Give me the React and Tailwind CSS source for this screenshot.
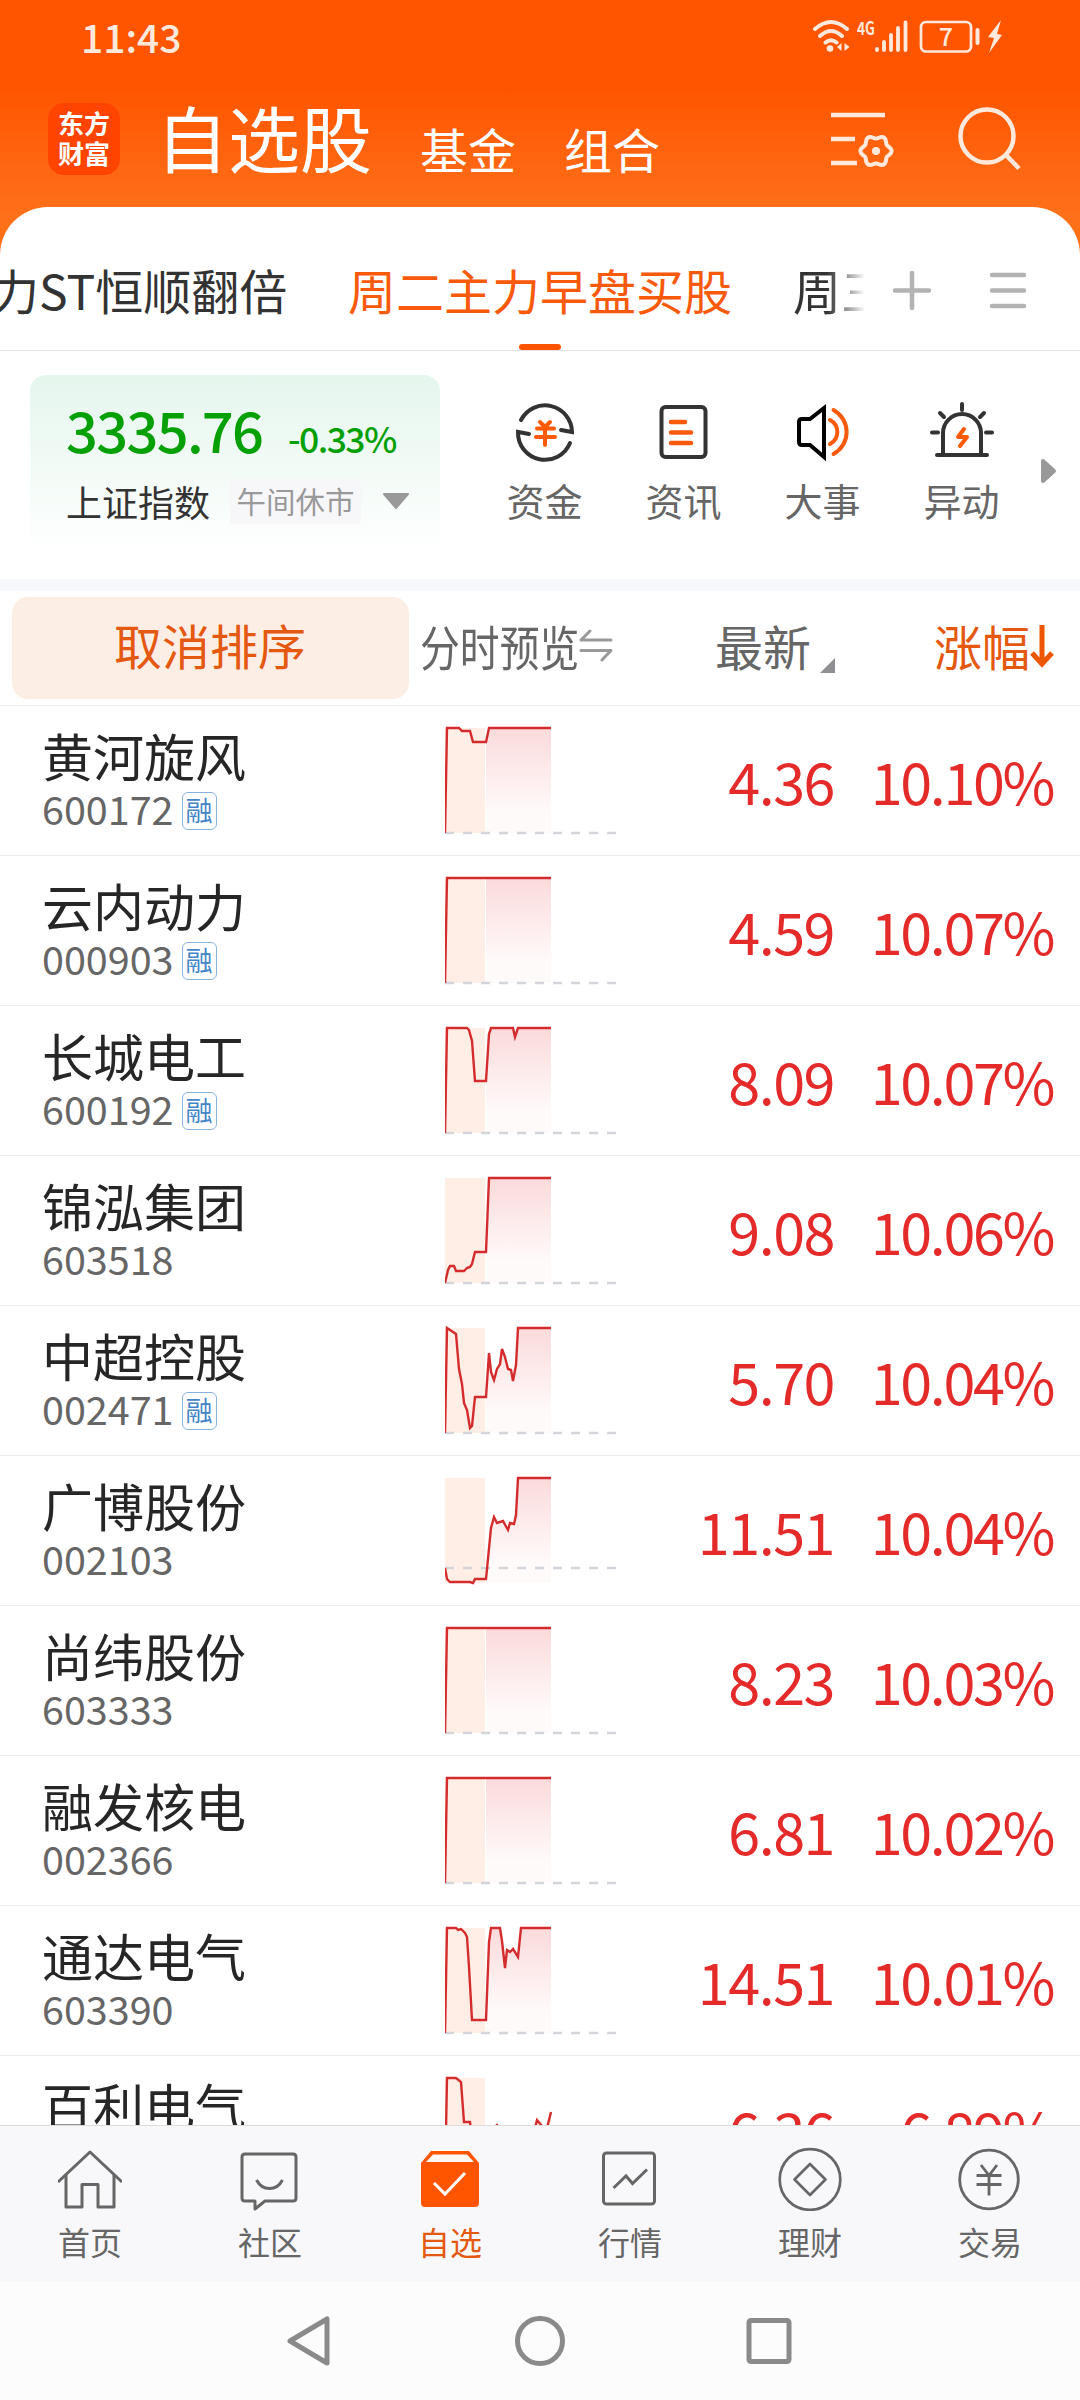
const STOCKS = [
  { name: "黄河旋风", code: "600172", margin: true, price: "4.36", change: "10.10%", base: 105, line: "0,105 2,0 14,0 17,3 25,3 28,14 41,14 44,0 106,0" },
  { name: "云内动力", code: "000903", margin: true, price: "4.59", change: "10.07%", base: 105, line: "0,105 2,0 106,0" },
  { name: "长城电工", code: "600192", margin: true, price: "8.09", change: "10.07%", base: 105, line: "0,105 2,0 22,0 24,2 27,13 30,53 41,53 44,6 46,0 68,0 70,9 73,0 106,0" },
  { name: "锦泓集团", code: "603518", margin: false, price: "9.08", change: "10.06%", base: 105, line: "0,105 3,92 5,88 9,88 11,93 19,93 22,90 25,89 27,86 30,74 41,74 44,0 106,0" },
  { name: "中超控股", code: "002471", margin: true, price: "5.70", change: "10.04%", base: 105, line: "0,105 2,0 11,6 14,41 17,56 19,75 22,82 25,100 27,98 30,69 41,69 44,25 46,44 49,52 52,41 55,36 57,21 60,29 63,41 66,42 68,53 71,37 73,0 106,0" },
  { name: "广博股份", code: "002103", margin: false, price: "11.51", change: "10.04%", base: 90, line: "0,90 2,101 5,104 25,104 28,105 30,101 41,101 46,50 49,39 52,45 58,43 63,52 65,45 69,46 71,37 73,0 106,0" },
  { name: "尚纬股份", code: "603333", margin: false, price: "8.23", change: "10.03%", base: 105, line: "0,105 2,0 106,0" },
  { name: "融发核电", code: "002366", margin: false, price: "6.81", change: "10.02%", base: 105, line: "0,105 2,0 106,0" },
  { name: "通达电气", code: "603390", margin: false, price: "14.51", change: "10.01%", base: 105, line: "0,105 2,0 11,0 13,2 16,1 20,5 22,9 24,39 27,92 41,92 44,14 46,0 55,0 57,13 60,40 62,22 65,24 68,21 73,29 76,0 106,0" },
  { name: "百利电气", code: "600468", margin: false, price: "6.36", change: "6.89%", base: 105, line: "0,105 2,0 11,0 16,4 19,44 25,44 27,60 41,60 44,54 52,47 60,56 80,60 90,50 92,42 97,48 102,50 106,34" },
];

const SHORTCUTS = [
  { label: "资金", icon: FundIcon },
  { label: "资讯", icon: NewsIcon },
  { label: "大事", icon: EventIcon },
  { label: "异动", icon: AlarmIcon },
];

const TABS = [
  { label: "首页", icon: HomeIcon },
  { label: "社区", icon: CommunityIcon },
  { label: "自选", icon: WatchlistIcon, active: true },
  { label: "行情", icon: MarketIcon },
  { label: "理财", icon: WealthIcon },
  { label: "交易", icon: TradeIcon },
];

// six-lobed gear outline around (46, 41)
const GEAR = Array.from({ length: 72 }, (_, i) => {
  const a = (i * Math.PI) / 36;
  const r = 14 + 1.6 * Math.cos(6 * a);
  return `${(46 + r * Math.cos(a)).toFixed(1)},${(41 + r * Math.sin(a)).toFixed(1)}`;
}).join(" ");

function FundIcon() {
  return (
    <svg width="64" height="64" viewBox="0 0 64 64" fill="none" strokeWidth="4">
      <path d="M8 20 A27 27 0 0 1 59 32 L48 30" stroke="#333" strokeLinecap="round" />
      <path d="M57 43 A27 27 0 0 1 5 32 L16 34" stroke="#333" strokeLinecap="round" />
      <path d="M27 22 L32 27 L37 22 M24 28.500 H41 M23 37 H42 M32 27 V45" stroke="#ff5a05" strokeLinecap="round" />
    </svg>
  );
}

function NewsIcon() {
  return (
    <svg width="64" height="64" viewBox="0 0 64 64" fill="none" strokeWidth="4" strokeLinecap="round">
      <rect x="9.5" y="7" width="44" height="50" rx="4" stroke="#333" />
      <path d="M19 22 H33 M19 32.500 H39 M19 43 H39" stroke="#f85a0c" strokeWidth="4.500" />
    </svg>
  );
}

function EventIcon() {
  return (
    <svg width="64" height="64" viewBox="0 0 64 64" fill="none" strokeWidth="4" strokeLinecap="round">
      <path d="M33 8 L19 19 H11 Q8 19 8 22 V42 Q8 45 11 45 H19 L33 57 Z" stroke="#000" />
      <path d="M39 20 A13.5 13.500 0 0 1 39 44" stroke="#f85a0c" />
      <path d="M42.500 10 A25 25 0 0 1 42.500 54" stroke="#f85a0c" />
    </svg>
  );
}

function AlarmIcon() {
  return (
    <svg width="64" height="64" viewBox="0 0 64 64" fill="none" strokeWidth="4" strokeLinecap="round" strokeLinejoin="round">
      <path d="M13 54 V33 A19 19 0 0 1 51 33 V54 M7 55 H57" stroke="#333" />
      <path d="M32 4 V10 M10 13 L14 17 M54 13 L50 17 M2 32.500 H8 M56 32.500 H62" stroke="#333" />
      <path d="M34 29 L28 37 L37 37 L30 46" stroke="#ff5a05" />
    </svg>
  );
}

function HomeIcon() {
  return (
    <svg width="64" height="64" viewBox="0 0 64 64" fill="none" stroke="#666" strokeWidth="3" strokeLinejoin="round">
      <path d="M0 35 L32 5 L64 35" />
      <path d="M8 28 V60 H24 V37.500 H40 V60 H56 V28" />
    </svg>
  );
}

function CommunityIcon() {
  return (
    <svg width="64" height="64" viewBox="0 0 64 64" fill="none" stroke="#666" strokeWidth="3" strokeLinejoin="round">
      <path d="M7 7 H55 Q58 7 58 10 V51 Q58 54 55 54 H27 L17 62 V54 H7 Q4 54 4 51 V10 Q4 7 7 7 Z" />
      <path d="M18.500 33 Q23 41.500 31.500 41.500 Q40 41.500 44.500 33" />
    </svg>
  );
}

function WatchlistIcon() {
  return (
    <svg width="64" height="64" viewBox="0 0 64 64">
      <path d="M3 16 L13 4 H51 L61 16 V56 Q61 60 57 60 H7 Q3 60 3 56 Z" fill="#ff5500" />
      <path d="M8 15 L15 7.500 H49 L56 15 Z" fill="#fdf6f2" />
      <path d="M16 36 L27 47 L47 26" fill="none" stroke="#fff" strokeWidth="3" />
    </svg>
  );
}

function MarketIcon() {
  return (
    <svg width="64" height="64" viewBox="0 0 64 64" fill="none" stroke="#666" strokeWidth="3">
      <rect x="5.500" y="6" width="51" height="51" rx="3" />
      <path d="M15.500 41 L28 29 L34.500 36.500 L49 22.500" />
    </svg>
  );
}

function WealthIcon() {
  return (
    <svg width="64" height="64" viewBox="0 0 64 64" fill="none" stroke="#666" strokeWidth="2.700" strokeLinejoin="round">
      <circle cx="32" cy="32.500" r="30.300" />
      <path d="M32 17 L47.500 32.500 L32 48 L16.500 32.500 Z" />
    </svg>
  );
}

function TradeIcon() {
  return (
    <svg width="64" height="64" viewBox="0 0 64 64" fill="none" stroke="#666" strokeWidth="2.800">
      <circle cx="31" cy="32.500" r="29.300" />
      <path d="M23 18 L31 28.500 L39 18 M18.500 28.500 H43.500 M18.500 37.500 H43.500 M31 28.500 V48.500" />
    </svg>
  );
}

function StatusBar() {
  return (
    <div className="flex h-[72px] items-center justify-between pl-[81px] pr-[76px] text-[#ffe9dc]">
      <span className="text-[39px] font-medium leading-[60px]">11:43</span>
      <svg width="192" height="36" viewBox="0 0 192 36" fill="none" stroke="currentColor">
        <path d="M3 11 Q19 -3 35 11 M8 18 Q19 8 30 18 M13.500 24.500 Q19 20 24.500 24.500" strokeWidth="4" strokeLinecap="round" />
        <circle cx="18" cy="30.500" r="3.300" fill="currentColor" stroke="none" />
        <path d="M29.500 25 V33 L25 29 Z M32.500 25 V33 L37.500 29 Z" fill="currentColor" stroke="none" />
        <text x="45" y="17" fontSize="18" fontWeight="700" textLength="18" lengthAdjust="spacingAndGlyphs" fill="currentColor" stroke="none">4G</text>
        <path d="M65 31 V32 M72 24 V32 M79 17 V32 M86 10 V32 M93.500 4.500 V32" strokeWidth="3.800" strokeLinecap="round" />
        <rect x="109" y="4" width="50" height="29.500" rx="5" strokeWidth="2.700" />
        <path d="M165.500 12 V25" strokeWidth="4" strokeLinecap="round" />
        <text x="134" y="27.500" fontSize="25" fontWeight="500" textAnchor="middle" fill="currentColor" stroke="none">7</text>
        <path d="M189 2 L176 19 L182 20 L177 35 L190 17 L185 16 Z" fill="currentColor" stroke="none" />
      </svg>
    </div>
  );
}

function Header() {
  return (
    <div className="flex h-[135px] pl-12 pr-[58px]">
      <div className="mt-[31px] flex size-[72px] shrink-0 flex-col items-center justify-center rounded-2xl bg-[#ff4400] pb-0.5 text-[26px] font-bold leading-[30px] text-white">
        <span>东方</span>
        <span>财富</span>
      </div>
      <div className="ml-[36px] flex h-[106px] items-end text-white">
        <span className="pb-[2px] text-[72px] leading-[80px]">自选股</span>
        <span className="ml-[48px] text-[48px] leading-[59px]">基金</span>
        <span className="ml-[48px] text-[48px] leading-[59px]">组合</span>
      </div>
      <div className="ml-auto flex items-start gap-[64px] pt-[38px]">
        <svg width="64" height="64" viewBox="0 0 64 64" fill="none" stroke="#ffe9dc" strokeWidth="4.500">
          <path d="M1 5 H55 M1 29 H25 M1 53 H27" />
          <polygon points={GEAR} strokeWidth="4" strokeLinejoin="round" />
          <circle cx="46" cy="41" r="4" fill="#ffe9dc" stroke="none" />
        </svg>
        <svg className="overflow-visible" width="64" height="64" viewBox="0 0 64 64" fill="none" stroke="#ffe9dc" strokeWidth="4.500">
          <circle cx="29" cy="26" r="26.500" />
          <path d="M48 45 L61 58.500" />
        </svg>
      </div>
    </div>
  );
}

function GroupTabs() {
  return (
    <div className="flex h-[144px] border-b border-[#e4e4e6] text-[48px] leading-[60px]">
      <div className="flex h-full w-[866px] overflow-hidden whitespace-nowrap pt-[52px]">
        <span className="-ml-[9px] w-[357px] shrink-0 text-[#333]">力ST恒顺翻倍</span>
        <div className="flex w-[384px] shrink-0 flex-col items-center text-[#f85a0c]">
          <span>周二主力早盘买股</span>
          <span className="mt-[25px] h-1.5 w-[42px] rounded-full bg-[#ff5500]" />
        </div>
        <span className="ml-[61px] shrink-0 bg-linear-to-r from-[#333] from-35% to-white to-75% bg-clip-text text-transparent">周三</span>
      </div>
      <svg className="mt-[64px] ml-[26px]" width="40" height="40" viewBox="0 0 40 40" stroke="#b3b3b3" strokeWidth="4.500" strokeLinecap="round">
        <path d="M3 19.500 H37 M20 2 V37" />
      </svg>
      <svg className="mt-[64px] ml-[56px]" width="40" height="40" viewBox="0 0 40 40" stroke="#b3b3b3" strokeWidth="4.500" strokeLinecap="round">
        <path d="M4 4 H36 M4 19.500 H36 M4 35 H36" />
      </svg>
    </div>
  );
}

function IndexPanel() {
  return (
    <div className="flex h-[228px] pl-[30px] pt-6">
      <div className="h-[180px] w-[410px] rounded-2xl bg-linear-to-b from-[#e5f6ed] to-white pl-[36px] pt-[25px]">
        <div className="flex items-baseline leading-[58px] text-[#05a005]">
          <span className="w-[222px] text-[56px] font-medium tracking-[-1.700px]">3335.76</span>
          <span className="text-[35.500px] font-medium tracking-[-1.600px]">-0.33%</span>
        </div>
        <div className="mt-[11px] flex items-center">
          <span className="text-[36px] leading-[46px] text-[#333]">上证指数</span>
          <span className="ml-[20px] h-[45px] w-[131px] rounded bg-[#f7f7fa] text-center text-[29.500px] leading-[43px] text-[#999]">午间休市</span>
          <svg className="ml-[21px]" width="28" height="17" viewBox="0 0 28 17">
            <path d="M2 1 H26 L14 15 Z" fill="#999" stroke="#999" strokeWidth="2" strokeLinejoin="round" />
          </svg>
        </div>
      </div>
      <div className="ml-[35px] flex">
        {SHORTCUTS.map(({ label, icon: Icon }) => (
          <div key={label} className="flex w-[139px] flex-col items-center pt-[25px]">
            <Icon />
            <span className="mt-[12px] text-[38px] leading-[48px] text-[#666]">{label}</span>
          </div>
        ))}
      </div>
      <svg className="ml-[10px] mt-[83px]" width="16" height="26" viewBox="0 0 16 26">
        <path d="M2 3 L13 13 L2 23 Z" fill="#999" stroke="#999" strokeWidth="4" strokeLinejoin="round" />
      </svg>
    </div>
  );
}

function ListHeader() {
  return (
    <div className="flex h-[115px] items-center border-b border-[#ebebed] pl-3 text-[48px] leading-[60px]">
      <div className="h-[102px] w-[397px] rounded-2xl bg-[#fdeee5] pr-[1px] pt-[17px] text-center text-[#e4580f]">取消排序</div>
      <span className="mb-[6px] ml-[11px] w-[159px] shrink-0 origin-left scale-x-[0.83] whitespace-nowrap text-[#666]">分时预览</span>
      <svg className="mb-[6px]" width="34" height="34" viewBox="0 0 34 34" fill="none" stroke="#999" strokeWidth="3" strokeLinecap="round" strokeLinejoin="round">
        <path d="M32 12 H2 L11 3 M2 22.500 H32 L23 32" />
      </svg>
      <span className="mb-[6px] ml-[102px] text-[#666]">最新</span>
      <svg className="ml-[9px] mt-[34px]" width="15" height="15" viewBox="0 0 15 15">
        <path d="M15 0 V15 H0 Z" fill="#8e8e93" />
      </svg>
      <span className="mb-[6px] ml-[99px] text-[#e4580f]">涨幅</span>
      <svg className="mb-[4px]" width="24" height="44" viewBox="0 0 24 44" fill="none" stroke="#ee5500" strokeWidth="5">
        <path d="M12 1 V39 M2 29 L12 40 L22 29" />
      </svg>
    </div>
  );
}

function Sparkline({ line, base }) {
  return (
    <svg className="shrink-0" width="176" height="112" viewBox="0 -3 176 112" fill="none">
      <defs>
        <linearGradient id="area" gradientUnits="userSpaceOnUse" x1="0" y1="0" x2="0" y2="105">
          <stop offset="0" stopColor="#fbdadb" />
          <stop offset="0.8" stopColor="#fffafa" />
        </linearGradient>
        <clipPath id="afternoon">
          <rect x="41" y="-3" width="65" height="110" />
        </clipPath>
      </defs>
      <rect x="0" y="0" width="40" height="105" fill="#ffeee5" />
      <polygon points={`${line} 106,105 0,105`} fill="url(#area)" clipPath="url(#afternoon)" />
      <path d={`M0 ${base} H171`} stroke="#d3d5da" strokeWidth="2.400" strokeDasharray="9 9" />
      <polyline points={line} stroke="#d42c2d" strokeWidth="2.400" />
    </svg>
  );
}

function StockRow({ stock }) {
  return (
    <div className="flex h-[150px] shrink-0 border-b border-[#ebebed]">
      <div className="w-[445px] pl-[42px] pt-[19px]">
        <div className="text-[51px] leading-[61px] text-[#262626]">{stock.name}</div>
        <div className="flex items-center">
          <span className="text-[39.500px] leading-[44px] text-[#666]">{stock.code}</span>
          {stock.margin && (
            <span className="ml-[8px] mt-[5px] h-[38px] w-[35px] rounded-md border-[1.500px] border-[#8ab4e0] text-center text-[27px] leading-[34px] text-[#4285c8]">融</span>
          )}
        </div>
      </div>
      <div className="pt-[19px]">
        <Sparkline line={stock.line} base={stock.base} />
      </div>
      <div className="w-[213px] pt-[39px] text-right text-[57.500px] leading-[70px] tracking-[-1.500px] text-[#e52a2a]">{stock.price}</div>
      <div className="w-[219px] pt-[39px] text-right text-[57.500px] leading-[70px] tracking-[-2.400px] text-[#e52a2a]">{stock.change}</div>
    </div>
  );
}

function TabBar() {
  return (
    <div className="flex h-[157px] border-t border-[#dcdcde] bg-[#f8f8fb]">
      {TABS.map(({ label, icon: Icon, active }) => (
        <div key={label} className={`flex w-[180px] flex-col items-center pt-[21px] ${active ? "text-[#e4580f]" : "text-[#666]"}`}>
          <Icon />
          <span className="mt-[8px] text-[32px] leading-[44px]">{label}</span>
        </div>
      ))}
    </div>
  );
}

function SystemNav() {
  return (
    <div className="flex h-[118px] items-center justify-center gap-[176px] bg-[#fcfcfc]">
      <svg width="54" height="54" viewBox="0 0 54 54" fill="none" stroke="#8a8a8a" strokeWidth="5" strokeLinejoin="round">
        <path d="M44 5 V49 L7 27 Z" />
      </svg>
      <svg width="54" height="54" viewBox="0 0 54 54" fill="none" stroke="#8a8a8a" strokeWidth="5">
        <circle cx="27" cy="27" r="22.500" />
      </svg>
      <svg width="54" height="54" viewBox="0 0 54 54" fill="none" stroke="#8a8a8a" strokeWidth="5">
        <rect x="6" y="6.500" width="40" height="41" rx="2" />
      </svg>
    </div>
  );
}

export default function App() {
  return (
    <div className="flex h-[2400px] w-[1080px] flex-col overflow-hidden bg-linear-to-b from-[#ff5500] from-[90px] to-[#ff7019] to-[215px] font-['Noto_Sans_CJK_SC',sans-serif]">
      <StatusBar />
      <Header />
      <div className="flex min-h-0 flex-1 flex-col rounded-t-[48px] bg-white">
        <GroupTabs />
        <IndexPanel />
        <div className="h-3 shrink-0 bg-[#f7f8fb]" />
        <ListHeader />
        <div className="flex min-h-0 flex-1 flex-col overflow-hidden">
          {STOCKS.map((stock) => (
            <StockRow key={stock.code} stock={stock} />
          ))}
        </div>
      </div>
      <TabBar />
      <SystemNav />
    </div>
  );
}
